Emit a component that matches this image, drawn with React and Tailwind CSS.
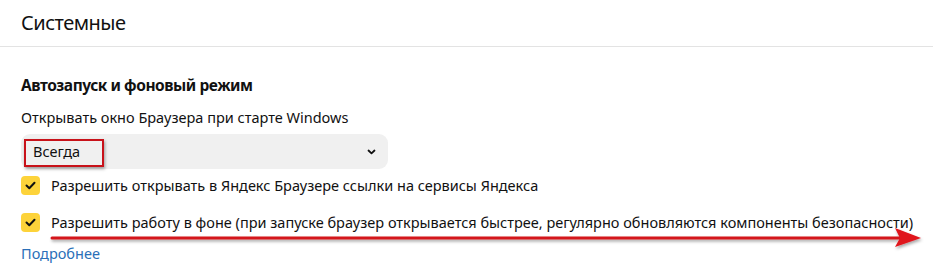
import React from "react";

function Check() {
  return (
    <span className="flex h-[19px] w-[19px] shrink-0 items-center justify-center rounded-[4px] bg-[#fdd33a]">
      <svg width="11" height="9" viewBox="0 0 11 9" fill="none">
        <path d="M1.5 4.5 L4.3 7.2 L9.5 1.8" stroke="#111" strokeWidth="2" strokeLinecap="round" strokeLinejoin="round" />
      </svg>
    </span>
  );
}

export default function App() {
  return (
    <div className="relative h-[275px] w-[933px] overflow-hidden bg-white font-['Noto_Sans',sans-serif] text-[#111]">
      <div className="flex h-[47px] items-center border-b border-[#e3e3e3] px-[21px]">
        <h1 className="text-[20px] leading-none tracking-[-0.5px]">Системные</h1>
      </div>
      <div className="flex flex-col px-[21px] pt-[28px]">
        <h2 className="text-[15.5px] font-bold leading-[20px] tracking-[-0.45px]">Автозапуск и фоновый режим</h2>
        <p className="mt-[12px] text-[14.5px] leading-[20px]">Открывать окно Браузера при старте Windows</p>
        <div className="relative mt-[7px] flex h-[35px] w-[367px] items-center justify-between rounded-[9px] bg-[#f0f0f0] pl-[12px] pr-[12px]">
          <span className="text-[14.5px]">Всегда</span>
          <svg width="9" height="6" viewBox="0 0 9 6" fill="none" className="mt-[1px]">
            <path d="M1.5 1.5 L4.5 4.3 L7.5 1.5" stroke="#111" strokeWidth="1.8" strokeLinecap="round" strokeLinejoin="round" />
          </svg>
          <div className="absolute left-[3px] top-[5px] h-[28px] w-[80px] border-2 border-[#c8121a] shadow-[1px_2px_3px_rgba(0,0,0,0.35)]" />
        </div>
        <label className="mt-[6px] flex items-center gap-[11px]">
          <Check />
          <span className="text-[14.5px] leading-[20px]">Разрешить открывать в Яндекс Браузере ссылки на сервисы Яндекса</span>
        </label>
        <label className="mt-[17px] flex items-center gap-[11px]">
          <Check />
          <span className="whitespace-nowrap text-[14.5px] leading-[20px]">Разрешить работу в фоне (при запуске браузер открывается быстрее, регулярно обновляются компоненты безопасности)</span>
        </label>
        <a className="mt-[11px] text-[14.5px] leading-[20px] text-[#2a6fb8]">Подробнее</a>
      </div>
      <svg className="pointer-events-none absolute left-0 top-0" width="933" height="275" viewBox="0 0 933 275">
        <defs>
          <filter id="sh" x="-5%" y="-50%" width="110%" height="200%">
            <feDropShadow dx="1" dy="2" stdDeviation="1.5" floodColor="#000" floodOpacity="0.35" />
          </filter>
        </defs>
        <g filter="url(#sh)">
          <path d="M52 238 L902 238" stroke="#d4131b" strokeWidth="3" strokeLinecap="round" />
          <path d="M895 228 L921 238 L895 247 L900 238 Z" fill="#e0141c" />
        </g>
      </svg>
    </div>
  );
}
